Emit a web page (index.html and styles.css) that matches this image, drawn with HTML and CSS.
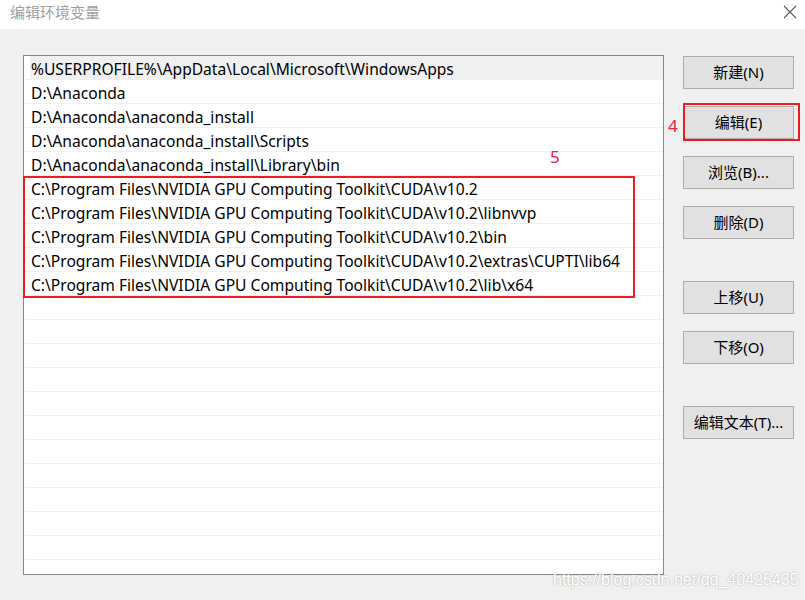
FILE: index.html
```html
<!DOCTYPE html>
<html lang="zh-CN">
<head>
<meta charset="utf-8">
<title>编辑环境变量</title>
<link rel="stylesheet" href="styles.css">
</head>
<body>
<div class="window">
  <div class="titlebar">
    <span class="title">编辑环境变量</span>
    <svg class="close" width="14" height="14" viewBox="0 0 14 14"><path d="M1 1 L13 13 M13 1 L1 13" stroke="#5a5a5a" stroke-width="1.1" fill="none"/></svg>
  </div>
  <div class="content">
    <div class="list">
      <div class="row sel">%USERPROFILE%\AppData\Local\Microsoft\WindowsApps</div>
      <div class="row">D:\Anaconda</div>
      <div class="row">D:\Anaconda\anaconda_install</div>
      <div class="row">D:\Anaconda\anaconda_install\Scripts</div>
      <div class="row">D:\Anaconda\anaconda_install\Library\bin</div>
      <div class="row">C:\Program Files\NVIDIA GPU Computing Toolkit\CUDA\v10.2</div>
      <div class="row">C:\Program Files\NVIDIA GPU Computing Toolkit\CUDA\v10.2\libnvvp</div>
      <div class="row">C:\Program Files\NVIDIA GPU Computing Toolkit\CUDA\v10.2\bin</div>
      <div class="row">C:\Program Files\NVIDIA GPU Computing Toolkit\CUDA\v10.2\extras\CUPTI\lib64</div>
      <div class="row">C:\Program Files\NVIDIA GPU Computing Toolkit\CUDA\v10.2\lib\x64</div>
      <div class="row"></div>
      <div class="row"></div>
      <div class="row"></div>
      <div class="row"></div>
      <div class="row"></div>
      <div class="row"></div>
      <div class="row"></div>
      <div class="row"></div>
      <div class="row"></div>
      <div class="row"></div>
      <div class="row"></div>
      <div class="row"></div>
    </div>
    <div class="buttons">
      <div class="group">
        <button class="btn">新建(N)</button>
        <button class="btn">编辑(E)</button>
        <button class="btn">浏览(B)...</button>
        <button class="btn">删除(D)</button>
      </div>
      <div class="group">
        <button class="btn">上移(U)</button>
        <button class="btn">下移(O)</button>
      </div>
      <div class="group">
        <button class="btn">编辑文本(T)...</button>
      </div>
    </div>
  </div>
  <div class="mark box5"></div>
  <div class="mark box4"></div>
  <span class="num num5">5</span>
  <span class="num num4">4</span>
  <span class="watermark">https://blog.csdn.net/qq_40425435</span>
</div>
</body>
</html>
```

FILE: styles.css
```css
html, body {
  margin: 0;
  padding: 0;
}
body {
  width: 805px;
  height: 600px;
  overflow: hidden;
  background: #f0f0f0;
  font-family: "Noto Sans", "Noto Sans CJK SC", sans-serif;
}
.window {
  position: relative;
  width: 805px;
  height: 600px;
  background: #f0f0f0;
}
.titlebar {
  height: 29px;
  background: #ffffff;
  display: flex;
  align-items: center;
  justify-content: space-between;
  padding: 0 8px 0 10px;
  box-sizing: border-box;
}
.title {
  font-family: "Noto Sans CJK SC", sans-serif;
  font-size: 15px;
  color: #a0a0a0;
  margin-top: -7px;
}
.close {
  margin-top: -6px;
}
.content {
  display: flex;
  align-items: flex-start;
  padding: 26px 0 0 23px;
}
.list {
  width: 639px;
  height: 518px;
  background: #ffffff;
  border: 1px solid #828790;
  overflow: hidden;
}
.row {
  height: 21px;
  padding-top: 2px;
  line-height: 23px;
  border-bottom: 1px solid #f0f0f0;
  padding-left: 6px;
  font-size: 15.6px;
  color: #000;
  white-space: nowrap;
  margin-left: 1px;
}
.row.sel {
  background: linear-gradient(to right, #ffffff 5px, #f0f0f0 5px);
  border-bottom-color: #f0f0f0;
}
.buttons {
  margin-left: 19px;
  display: flex;
  flex-direction: column;
  gap: 42px;
  padding-top: 1px;
}
.group {
  display: flex;
  flex-direction: column;
  gap: 17px;
}
.btn {
  width: 111px;
  height: 33px;
  background: #e1e1e1;
  border: 1px solid #adadad;
  border-radius: 0;
  font-family: "Noto Sans", "Noto Sans CJK SC", sans-serif;
  font-size: 15px;
  line-height: 31px;
  color: #000;
  padding: 0;
  margin: 0;
}
.mark {
  position: absolute;
  border: 2px solid #ed1c24;
  box-sizing: border-box;
}
.box5 {
  left: 23px;
  top: 176px;
  width: 612px;
  height: 122px;
}
.box4 {
  left: 683px;
  top: 103px;
  width: 117px;
  height: 38px;
}
.num {
  position: absolute;
  font-family: "Noto Sans", sans-serif;
  font-size: 17px;
  color: #ec2040;
  line-height: 1;
}
.num5 {
  left: 550px;
  top: 148px;
}
.num4 {
  left: 668px;
  top: 117px;
}
.watermark {
  position: absolute;
  left: 553px;
  top: 571px;
  font-family: "Liberation Sans", Arial, sans-serif;
  font-size: 16px;
  color: #ffffff;
  text-shadow: 0 0 2px rgba(110,110,110,0.6);
  white-space: nowrap;
}
```
